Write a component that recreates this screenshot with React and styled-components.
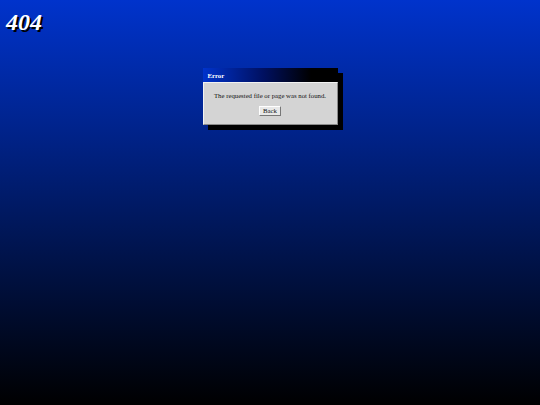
import React from 'react';
import styled, { createGlobalStyle } from 'styled-components';

const GlobalStyle = createGlobalStyle`
  html, body {
    margin: 0;
    padding: 0;
  }
  body {
    font-family: "Liberation Serif", "Times New Roman", serif;
    background: #000;
  }
`;

const Page = styled.div`
  width: 540px;
  height: 405px;
  overflow: hidden;
  background: linear-gradient(to bottom, #0033cc 0%, #001a66 50%, #000000 100%);
  display: flex;
  flex-direction: column;
`;

const BigCode = styled.h1`
  margin: 0;
  padding: 8px 0 0 6px;
  font-size: 24px;
  line-height: 28px;
  font-weight: bold;
  font-style: italic;
  color: #fff;
  text-shadow: 2px 2px 0 #000;
`;

const Dialog = styled.div`
  width: 135px;
  margin: 32px auto 0;
  box-shadow: 5px 5px 0 #000;
`;

const TitleBar = styled.div`
  height: 14px;
  padding-left: 5px;
  display: flex;
  align-items: center;
  background: linear-gradient(to right, #0033cc 0%, #001060 45%, #000000 80%);
  color: #fff;
  font-size: 6.75px;
  font-weight: bold;
`;

const Body = styled.div`
  background: #d4d4d4;
  border: 1px solid;
  border-color: #f2f2f2 #8a8a8a #8a8a8a #f2f2f2;
  padding: 8px 4px 8px;
  display: flex;
  flex-direction: column;
  align-items: center;
  gap: 6px;
  color: #111;
  font-size: 6.75px;
`;

const Message = styled.p`
  margin: 0;
  line-height: 9px;
`;

const Button = styled.button`
  font-family: "Liberation Serif", "Times New Roman", serif;
  font-size: 6.75px;
  line-height: 8px;
  height: 10px;
  padding: 0 3px;
  color: #111;
  background: #e8e8e8;
  border: 1px solid;
  border-color: #fff #777 #777 #fff;
  cursor: pointer;
`;

export default function App() {
  return (
    <Page>
      <GlobalStyle />
      <BigCode>404</BigCode>
      <Dialog>
        <TitleBar>Error</TitleBar>
        <Body>
          <Message>The requested file or page was not found.</Message>
          <Button>Back</Button>
        </Body>
      </Dialog>
    </Page>
  );
}
